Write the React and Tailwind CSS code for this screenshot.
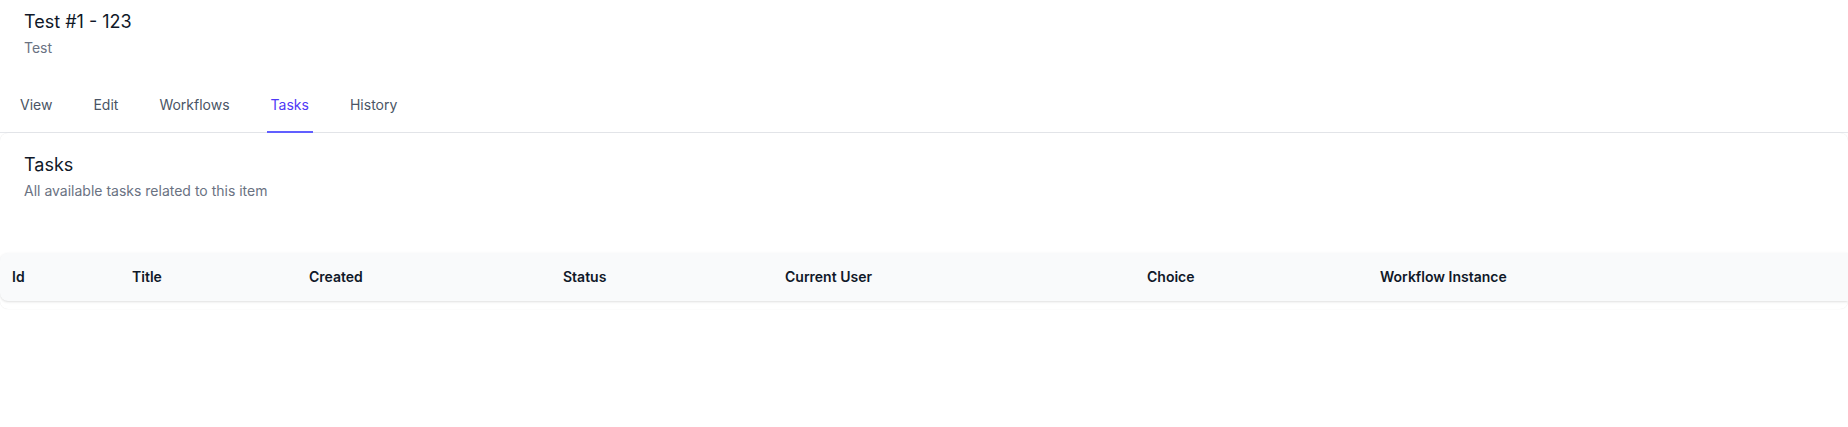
import { useState } from 'react';

const tabs = ['View', 'Edit', 'Workflows', 'Tasks', 'History'];
const columns = ['Id', 'Title', 'Created', 'Status', 'Current User', 'Choice', 'Workflow Instance'];

export default function App() {
  const [tab, setTab] = useState('Tasks');

  return (
    <div className="min-h-screen bg-white" style={{ fontFamily: 'Inter, "Noto Sans", sans-serif' }}>
      {/* Item header */}
      <div className="px-6 pt-2">
        <h1 className="text-lg leading-7 text-gray-900">Test #1 - 123</h1>
        <p className="mt-0.5 text-sm text-gray-500">Test</p>
      </div>

      {/* Tabs */}
      <div className="mt-[21px] border-b border-gray-200">
        <nav className="-mb-px flex gap-[33px] pl-4">
          {tabs.map((t) => (
            <button
              key={t}
              onClick={() => setTab(t)}
              className={`border-b-2 px-1 py-4 text-sm leading-5 ${
                tab === t
                  ? 'border-indigo-500 text-indigo-600'
                  : 'border-transparent text-gray-600 hover:text-gray-800'
              }`}
            >
              {t}
            </button>
          ))}
        </nav>
      </div>

      {/* Tasks panel */}
      <div className="rounded-lg shadow-[0_0_1px_rgba(0,0,0,0.12)] pt-[18px] pb-2">
        <div className="px-6">
          <h2 className="text-lg leading-7 text-gray-900">Tasks</h2>
          <p className="mt-0.5 text-sm text-gray-500">All available tasks related to this item</p>
        </div>

        <div className="mt-[52px]">
          <div className="grid h-12 grid-cols-[120px_177px_254px_222px_362px_233px_1fr] items-center rounded-l-lg bg-gray-50 shadow-sm">
            {columns.map((c) => (
              <div key={c} className="px-3 text-sm font-semibold text-gray-900">
                {c}
              </div>
            ))}
          </div>
        </div>
      </div>
    </div>
  );
}
